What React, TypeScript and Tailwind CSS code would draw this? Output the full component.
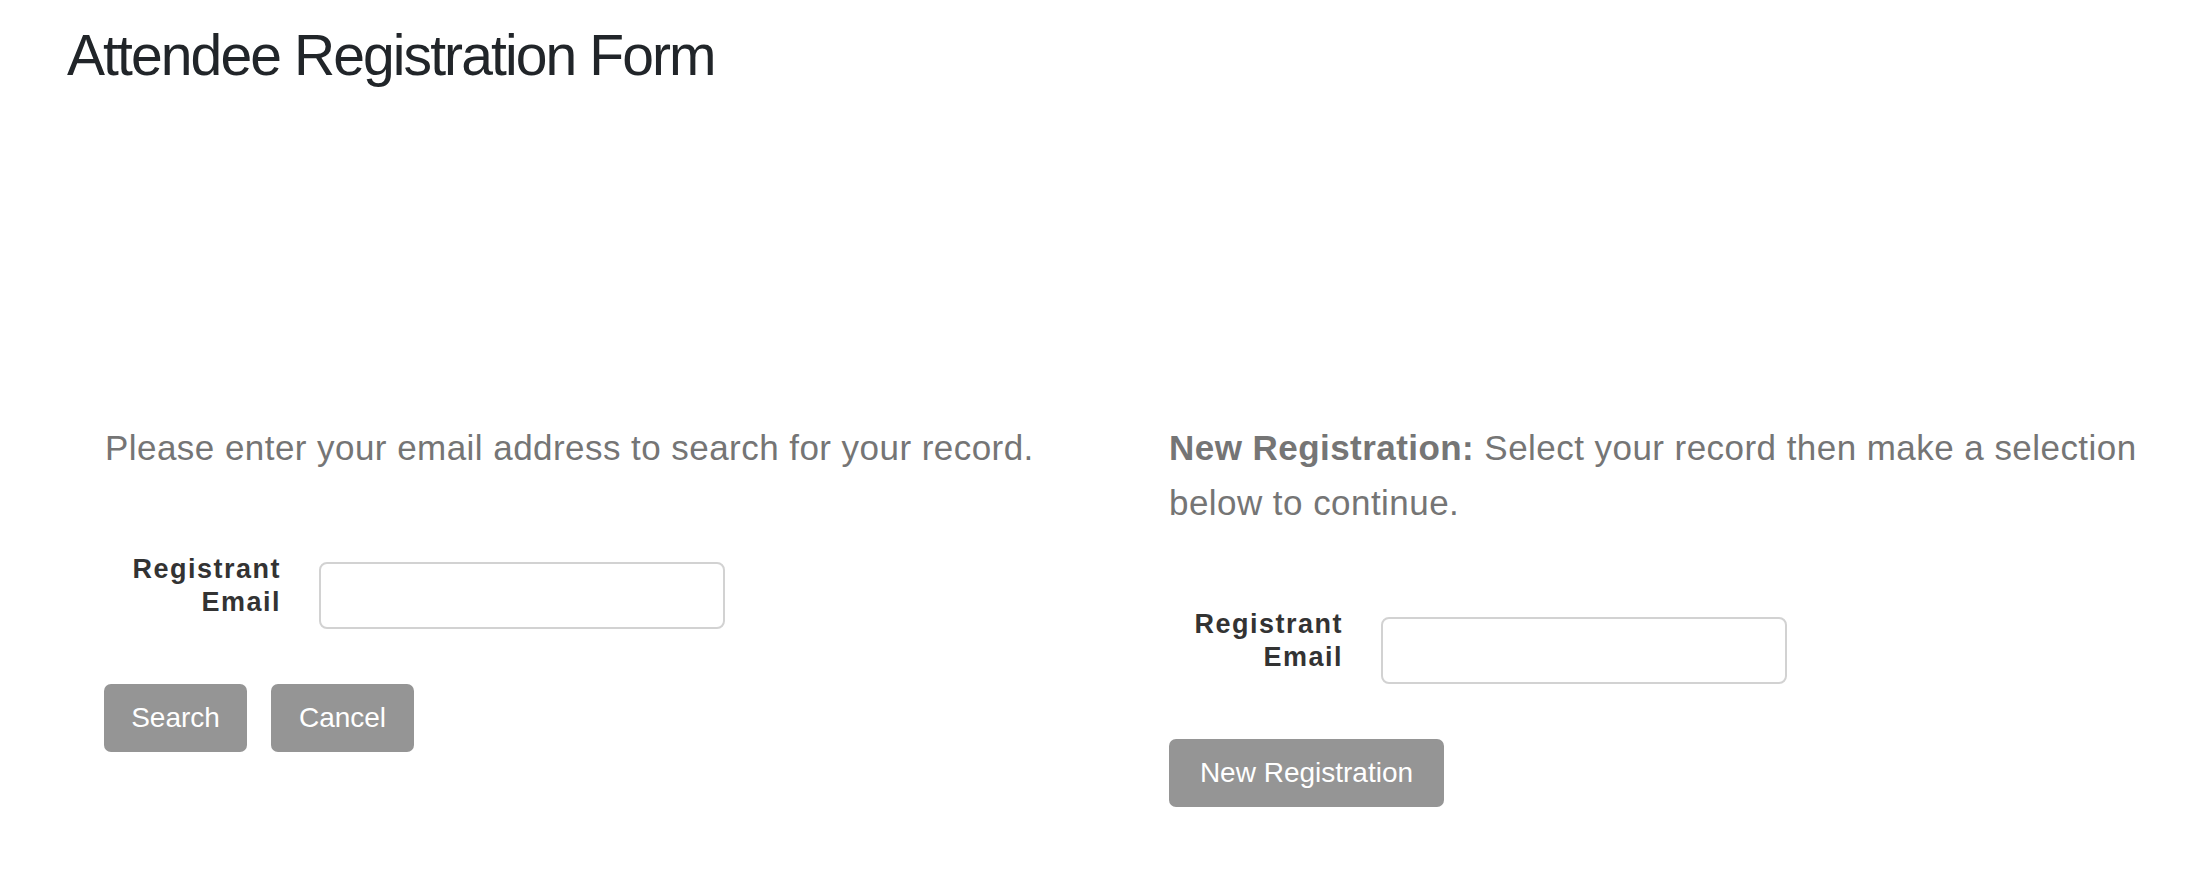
import React from "react";

function EmailRow() {
  return (
    <div className="flex items-start">
      <label className="w-[174px] text-right text-[27px] leading-[33px] font-bold tracking-[1.5px] text-[#333333]">
        Registrant
        <br />
        Email
      </label>
      <input
        type="email"
        className="ml-[38px] mt-[9px] h-[67px] w-[406px] rounded-[8px] border-2 border-[#d2d2d2] bg-white px-3 text-[26px] outline-none"
      />
    </div>
  );
}

function GrayButton({ children, width }: { children: React.ReactNode; width: string }) {
  return (
    <button
      type="button"
      className={`flex h-[68px] items-center justify-center rounded-[7px] bg-[#959595] text-[28px] text-white ${width}`}
    >
      {children}
    </button>
  );
}

export default function App() {
  return (
    <div className="min-h-[888px] w-[2200px] bg-white font-['Liberation_Sans',Arial,sans-serif]">
      <h1 className="ml-[67px] pt-[21px] text-[57px] leading-[68px] tracking-[-1.9px] text-[#212529]">
        Attendee Registration Form
      </h1>

      <div className="mt-[331px] flex">
        {/* search existing record */}
        <div className="w-[1169px] pl-[104px]">
          <p className="pl-px text-[35px] leading-[55px] tracking-[0.45px] text-[#757575]">
            Please enter your email address to search for your record.
          </p>
          <div className="mt-[78px] pl-[3px]">
            <EmailRow />
          </div>
          <div className="mt-[55px] flex gap-[24px]">
            <GrayButton width="w-[143px]">Search</GrayButton>
            <GrayButton width="w-[143px]">Cancel</GrayButton>
          </div>
        </div>

        {/* new registration */}
        <div className="w-[1010px]">
          <p className="text-[35px] leading-[55px] tracking-[0.45px] text-[#757575]">
            <span className="font-bold">New Registration:</span> Select your record then make a selection below to continue.
          </p>
          <div className="mt-[78px]">
            <EmailRow />
          </div>
          <div className="mt-[55px] flex">
            <GrayButton width="w-[275px]">New Registration</GrayButton>
          </div>
        </div>
      </div>
    </div>
  );
}
